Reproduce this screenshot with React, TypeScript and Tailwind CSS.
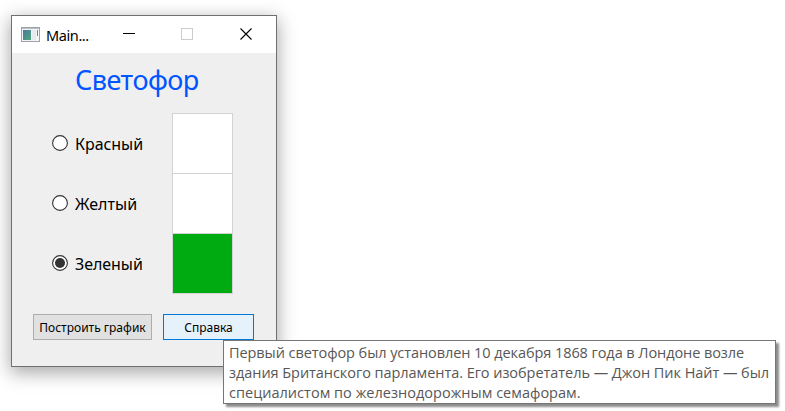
import React from "react";

function AppIcon() {
  return (
    <svg width="19" height="15" viewBox="0 0 19 15" className="ml-[9px] shrink-0" shapeRendering="crispEdges">
      <defs>
        <linearGradient id="pane" x1="0" y1="0" x2="1" y2="1">
          <stop offset="0" stopColor="#4a78a0" />
          <stop offset="1" stopColor="#4fa878" />
        </linearGradient>
      </defs>
      <rect x="0.5" y="0.5" width="18" height="14" fill="#f4f5f6" stroke="#9da3ab" />
      <rect x="1" y="1" width="17" height="1" fill="#b9bec5" />
      <rect x="2" y="3" width="8" height="10" fill="url(#pane)" />
      <rect x="11" y="3" width="4" height="10" fill="#e6eaed" />
      <rect x="16" y="3" width="1" height="6" fill="#4f9c85" />
    </svg>
  );
}

function TitleBar() {
  return (
    <div className="flex h-[37px] items-center bg-white">
      <AppIcon />
      <span className="ml-[6px] w-[64px] text-[14.5px] leading-5 tracking-[-0.4px] text-black">Main...</span>
      <svg width="154" height="37" viewBox="0 0 154 37" className="-ml-px shrink-0" shapeRendering="crispEdges">
        <path d="M14 17.5h12" stroke="#000" />
        <rect x="72.5" y="12.5" width="11" height="11" fill="none" stroke="#cccccc" />
        <path d="M131.5 12.5l11 11M142.5 12.5l-11 11" stroke="#000" strokeWidth="1.1" shapeRendering="auto" />
      </svg>
    </div>
  );
}

function Radio({ checked, children }: { checked?: boolean; children: React.ReactNode }) {
  return (
    <label className="flex h-[60px] items-center">
      <svg width="16" height="16" viewBox="0 0 16 16" className="shrink-0">
        <circle cx="8" cy="8" r="7.4" fill="#fff" stroke="#333" strokeWidth="1.1" />
        {checked && <circle cx="8" cy="8" r="5" fill="#333" />}
      </svg>
      {children}
    </label>
  );
}

export default function App() {
  return (
    <main className="relative h-[411px] w-[785px] overflow-hidden bg-white pl-[11px] pt-[15px] font-['Noto_Sans','Open_Sans',sans-serif] whitespace-nowrap">
      <section className="flex h-[352px] w-[266px] flex-col border border-[#707070] bg-[#efefef] shadow-[0_5px_17px_1px_rgba(0,0,0,0.34)]">
        <TitleBar />
        <h1 className="ml-[63px] mt-[8px] h-[40px] text-[27px] leading-[38px] tracking-[-0.5px] text-[#0055ff]">Светофор</h1>
        <div className="mt-[12px] flex h-[181px] pl-[40px]">
          <div className="w-[120px] text-[16px] text-black">
            <Radio>
              <span className="ml-[7px] pt-[2px] tracking-[-0.05px]">Красный</span>
            </Radio>
            <Radio>
              <span className="ml-[7px] pt-[2px] tracking-[0.05px]">Желтый</span>
            </Radio>
            <Radio checked>
              <span className="ml-[7px] pt-[2px] tracking-[-0.05px]">Зеленый</span>
            </Radio>
          </div>
          <div className="flex h-[181px] w-[61px] flex-col border border-[#d3d3d3]">
            <div className="h-[60px] border-b border-[#d3d3d3] bg-white" />
            <div className="h-[60px] border-b border-[#d3d3d3] bg-white" />
            <div className="h-[59px] bg-[#00aa11]" />
          </div>
        </div>
        <div className="mt-[20px] flex gap-[11px] pl-[21px] text-[12px] text-black">
          <button className="h-[26px] w-[119px] border border-[#adadad] bg-[#e1e1e1] pt-px">Построить график</button>
          <button className="h-[26px] w-[91px] border border-[#0078d7] bg-[#e5f1fb] pt-px">Справка</button>
        </div>
      </section>
      <div className="absolute left-[223px] top-[340px] h-[64px] w-[553px] border border-[#767676] bg-white pl-[5px] pt-[2px] font-['Open_Sans','Noto_Sans',sans-serif] text-[14.5px] leading-[20px] text-[#575757] shadow-[3px_3px_2px_rgba(0,0,0,0.45)]">
        <p className="tracking-[-0.07px]">Первый светофор был установлен 10 декабря 1868 года в Лондоне возле</p>
        <p className="tracking-[-0.05px]">здания Британского парламента. Его изобретатель — Джон Пик Найт — был</p>
        <p className="tracking-[0.02px]">специалистом по железнодорожным семафорам.</p>
      </div>
    </main>
  );
}
